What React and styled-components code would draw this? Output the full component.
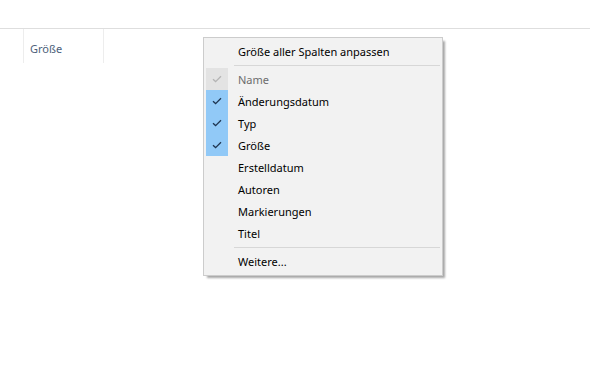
import React from "react";
import styled, { createGlobalStyle } from "styled-components";

const GlobalStyle = createGlobalStyle`
    html, body {
        margin: 0;
        padding: 0;
        background: #ffffff;
    }
    body {
        font-family: "Segoe UI", "Noto Sans", "Liberation Sans", sans-serif;
        font-size: 11px;
    }
`;

const Page = styled.div`
    position: relative;
    width: 590px;
    height: 365px;
    background: #fff;
    overflow: hidden;
`;

const TopPane = styled.div`
    height: 28px;
    border-bottom: 1px solid #dedede;
`;

const HeaderRow = styled.div`
    display: flex;
    padding-left: 23px;
    height: 34px;
`;

const HeaderCell = styled.div`
    display: flex;
    align-items: center;
    width: ${props => props.width}px;
    padding-left: 6px;
    padding-top: 4px;
    border-left: 1px solid #ededed;
    border-right: 1px solid #ededed;
    color: #4c607a;
`;

const Menu = styled.div`
    position: absolute;
    left: 203px;
    top: 37px;
    width: 238px;
    padding: 2px 0 3px 0;
    background: #f2f2f2;
    border: 1px solid #cccccc;
    box-shadow: 3px 3px 2px -1px rgba(0, 0, 0, 0.35);
    color: #000;
`;

const Item = styled.div`
    display: flex;
    align-items: center;
    height: 22px;
    padding-left: 2px;
    color: ${props => props.disabled ? '#6d6d6d' : '#000'};
`;

const CheckBox = styled.div`
    width: 22px;
    height: 22px;
    display: flex;
    align-items: center;
    justify-content: center;
    background: ${props => props.state === 'on' ? '#91c9f7' : props.state === 'off' ? '#e3e3e3' : 'transparent'};
    svg {
        stroke: ${props => props.state === 'on' ? '#1f3550' : '#b4b4b4'};
    }
`;

const Label = styled.span`
    margin-left: 10px;
    line-height: 22px;
    padding-top: 2px;
`;

const Separator = styled.div`
    height: 6px;
    display: flex;
    align-items: center;
    padding-left: 30px;
    padding-right: 2px;
    &::after {
        content: '';
        flex: 1;
        height: 1px;
        background: #d7d7d7;
    }
`;

function Check(){
    return(
        <svg width="10" height="8" viewBox="0 0 10 8" fill="none" strokeWidth="1.3">
            <path d="M1 4.2 L3.6 6.6 L9 1.2" />
        </svg>
    )
}

const columns = [
    { label: 'Name', checked: true, disabled: true },
    { label: 'Änderungsdatum', checked: true },
    { label: 'Typ', checked: true },
    { label: 'Größe', checked: true },
    { label: 'Erstelldatum' },
    { label: 'Autoren' },
    { label: 'Markierungen' },
    { label: 'Titel' },
];

export default function App(){
    return(
        <Page>
            <GlobalStyle />
            <TopPane />
            <HeaderRow>
                <HeaderCell width={73}>Größe</HeaderCell>
            </HeaderRow>
            <Menu>
                <Item>
                    <CheckBox />
                    <Label>Größe aller Spalten anpassen</Label>
                </Item>
                <Separator />
                {columns.map((col, index) => {
                    return(
                        <Item key={index} disabled={col.disabled}>
                            <CheckBox state={col.checked ? (col.disabled ? 'off' : 'on') : null}>
                                {col.checked ? <Check /> : null}
                            </CheckBox>
                            <Label>{col.label}</Label>
                        </Item>
                    )
                })}
                <Separator />
                <Item>
                    <CheckBox />
                    <Label>Weitere...</Label>
                </Item>
            </Menu>
        </Page>
    )
}
